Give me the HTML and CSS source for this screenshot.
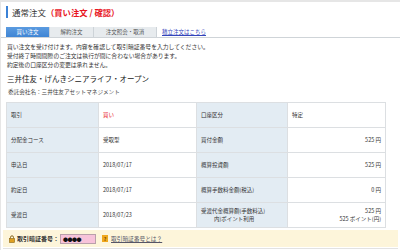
FILE: index.html
```html
<!DOCTYPE html>
<html lang="ja">
<head>
  <meta charset="UTF-8">
  <meta name="viewport" content="width=device-width, initial-scale=1.0">
  <title>通常注文（買い注文 / 確認）</title>
  <link rel="stylesheet" href="styles.css">
</head>
<body>
  <div class="page">
    <h1 class="title"><span class="title-main">通常注文</span><span class="title-sub">（買い注文 / 確認）</span></h1>

    <div class="tabs">
      <a class="tab active" href="#">買い注文</a>
      <a class="tab" href="#">解約注文</a>
      <a class="tab wide" href="#">注文照会・取消</a>
      <a class="tab-link" href="#">積立注文はこちら</a>
    </div>

    <p class="notes">
      買い注文を受け付けます。内容を確認して取引暗証番号を入力してください。<br>
      受付終了時間間際のご注文は執行が間に合わない場合があります。<br>
      約定後の口座区分の変更は承れません。
    </p>

    <h2 class="fund">三井住友・げんきシニアライフ・オープン</h2>
    <p class="company">委託会社名：三井住友アセットマネジメント</p>

    <table class="detail">
      <tr>
        <th>取引</th>
        <td class="red">買い</td>
        <th>口座区分</th>
        <td>特定</td>
      </tr>
      <tr>
        <th>分配金コース</th>
        <td>受取型</td>
        <th>買付金額</th>
        <td class="num">525 円</td>
      </tr>
      <tr>
        <th>申込日</th>
        <td>2018/07/17</td>
        <th>概算投資額</th>
        <td class="num">525 円</td>
      </tr>
      <tr>
        <th>約定日</th>
        <td>2018/07/17</td>
        <th>概算手数料金額(税込)</th>
        <td class="num">0 円</td>
      </tr>
      <tr>
        <th>受渡日</th>
        <td>2018/07/23</td>
        <th>受渡代金概算額(手数料込)<br><span class="sub">内)ポイント利用</span></th>
        <td class="num">525 円<br>525 ポイント(円)</td>
      </tr>
    </table>
  </div>

  <div class="pin-bar">
    <svg class="lock" width="6" height="8" viewBox="0 0 6 8">
      <path d="M1.5 3.5V2.3a1.5 1.5 0 0 1 3 0v1.2" fill="none" stroke="#7a5a10" stroke-width="0.9"/>
      <rect x="0.5" y="3.5" width="5" height="4" fill="#e0a020" stroke="#8a6410" stroke-width="0.6"/>
    </svg>
    <span class="pin-label">取引暗証番号：</span>
    <span class="pin-input">●●●●</span>
    <span class="help-icon">?</span>
    <a class="help-link" href="#">取引暗証番号とは？</a>
  </div>

  <div class="actions">
    <div class="btn-edge"></div>
  </div>
</body>
</html>
```

FILE: styles.css
```css
body {
  margin: 0;
  font-family: "Noto Sans CJK JP", "Liberation Sans", sans-serif;
  color: #333;
  background: #fff;
  border-top: 2px solid #e6e6e6;
  border-left: 1px solid #e6e6e6;
}
.page {
  padding: 4px 0 0 5px;
}
.title {
  margin: 0;
  height: 12px;
  line-height: 12px;
  font-size: 8.5px;
  font-weight: normal;
  border-left: 2px solid #3b82d6;
  padding-left: 4px;
  display: flex;
  align-items: center;
}
.title-main {
  color: #333;
}
.title-sub {
  color: #e8141e;
  font-weight: bold;
  font-size: 8.3px;
}
.tabs {
  margin-top: 9px;
  margin-left: -5px;
  padding-left: 5px;
  display: flex;
  align-items: flex-end;
  border-bottom: 1px solid #cfd4d8;
  height: 10px;
}
.tab {
  width: 43px;
  height: 10px;
  line-height: 10px;
  font-size: 5.5px;
  text-align: center;
  color: #555;
  text-decoration: none;
  background: #e7ebee;
  border-right: 1px solid #cdd3d8;
}
.tab.wide {
  width: 62px;
}
.tab.active {
  background: linear-gradient(#5b9be0, #3f85d4);
  color: #fff;
}
.tab-link {
  margin-left: 5px;
  line-height: 10px;
  font-size: 5.5px;
  color: #3344bb;
  text-decoration: underline;
}
.notes {
  margin: 4px 0 0 1px;
  font-size: 5.8px;
  line-height: 9px;
  color: #333;
}
.fund {
  margin: 5px 0 0 1px;
  font-size: 7.5px;
  line-height: 10px;
  font-weight: normal;
  color: #222;
}
.company {
  margin: 4px 0 0 2px;
  font-size: 5.6px;
  line-height: 8px;
  color: #444;
}
.detail {
  margin-top: 6px;
  border-collapse: collapse;
  width: 380px;
  table-layout: fixed;
  font-size: 5.5px;
}
.detail th,
.detail td {
  height: 24px;
  border: 1px solid #dcdfe2;
  padding: 0 4px;
  text-align: left;
  font-weight: normal;
  line-height: 8px;
  color: #333;
}
.detail th {
  background: #e3ecf3;
}
.detail tr > :nth-child(1) { width: 83px; }
.detail tr > :nth-child(2) { width: 89px; }
.detail tr > :nth-child(3) { width: 82px; }
.detail td.red {
  color: #e8141e;
}
.detail td.num {
  text-align: right;
}
.detail .sub {
  padding-left: 13px;
}
.pin-bar {
  margin: 2px 2px 0 2px;
  height: 17px;
  background: #fdf5da;
  display: flex;
  align-items: center;
  padding-left: 6px;
  font-size: 6px;
}
.lock {
  margin-right: 2px;
}
.pin-label {
  font-weight: bold;
  color: #333;
}
.pin-input {
  margin-left: 1px;
  width: 32px;
  height: 8px;
  line-height: 8px;
  padding-left: 2px;
  background: #f7c3da;
  border: 1px solid #b9a0ab;
  font-size: 5px;
  letter-spacing: -0.5px;
  color: #111;
}
.help-icon {
  margin-left: 6px;
  width: 6px;
  height: 7px;
  line-height: 7px;
  text-align: center;
  background: #f0a81c;
  color: #6a4000;
  font-size: 5px;
  font-weight: bold;
}
.help-link {
  margin-left: 3px;
  color: #556;
  font-size: 5.7px;
  text-decoration: underline;
}
.actions {
  margin: 1px 2px 0 2px;
  border-top: 1px solid #e2e2e2;
  padding: 1px 0 0 6px;
}
.btn-edge {
  width: 50px;
  height: 16px;
  border: 1px solid #c8c8c8;
  background: #eee;
}
```
